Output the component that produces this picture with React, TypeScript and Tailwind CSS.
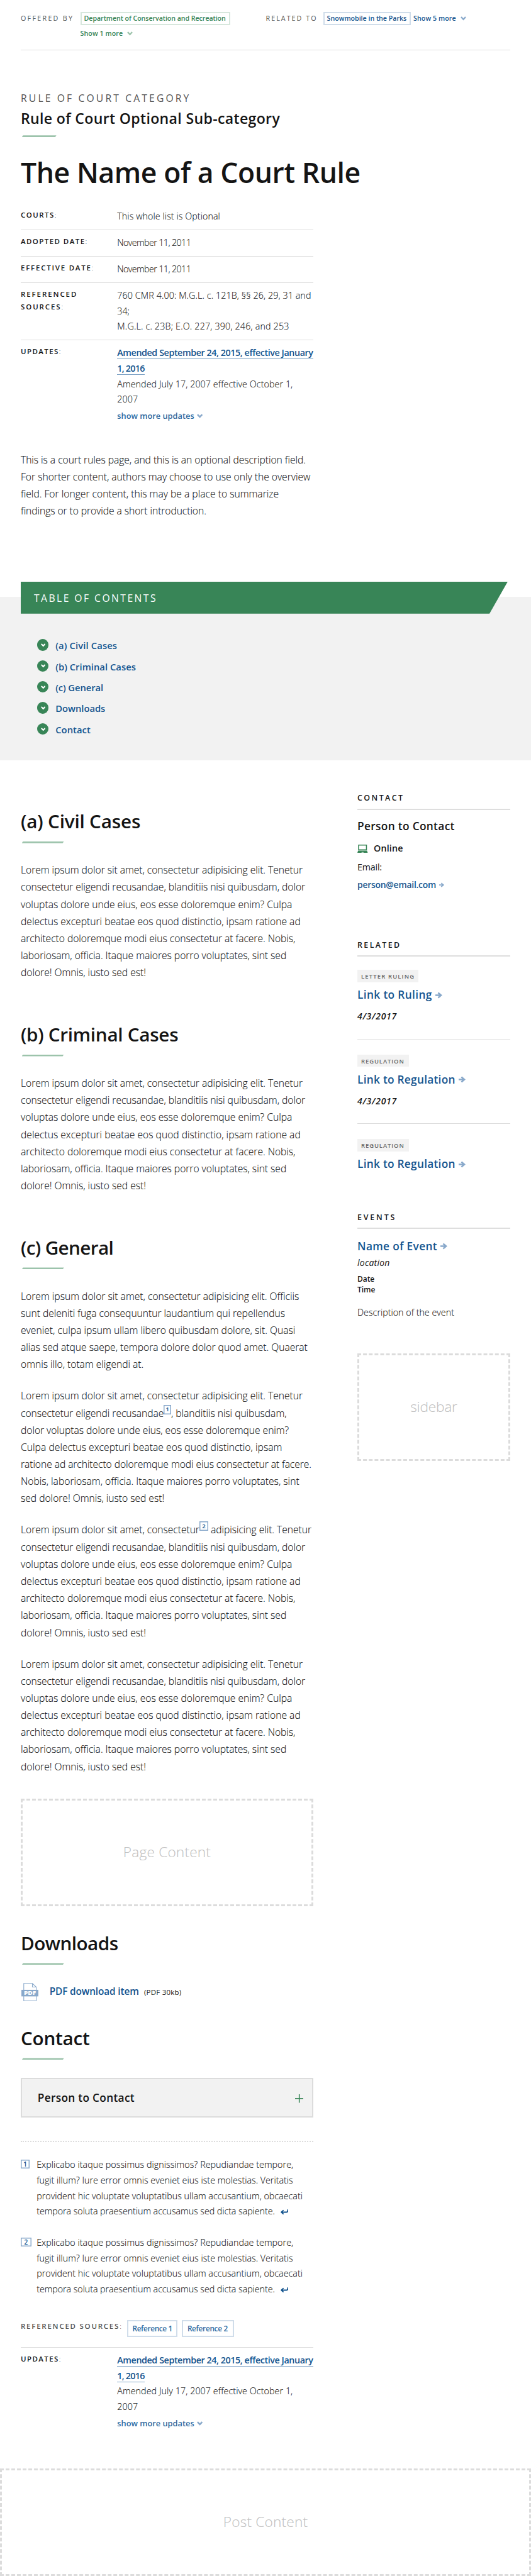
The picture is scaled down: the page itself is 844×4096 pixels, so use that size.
import type { ReactNode } from "react";

type Line = { text: ReactNode; track?: string };

const LOREM: Line[] = [
  { text: "Lorem ipsum dolor sit amet, consectetur adipisicing elit. Tenetur", track: "tracking-[-0.058px]" },
  { text: "consectetur eligendi recusandae, blanditiis nisi quibusdam, dolor", track: "tracking-[-0.056px]" },
  { text: "voluptas dolore unde eius, eos esse doloremque enim? Culpa", track: "tracking-[-0.025px]" },
  { text: "delectus excepturi beatae eos quod distinctio, ipsam ratione ad", track: "tracking-[-0.021px]" },
  { text: "architecto doloremque modi eius consectetur at facere. Nobis,", track: "tracking-[-0.053px]" },
  { text: "laboriosam, officia. Itaque maiores porro voluptates, sint sed", track: "tracking-[-0.04px]" },
  { text: "dolore! Omnis, iusto sed est!", track: "tracking-[-0.042px]" },
];

const INTRO: Line[] = [
  { text: "This is a court rules page, and this is an optional description field.", track: "tracking-[-0.06px]" },
  { text: "For shorter content, authors may choose to use only the overview", track: "tracking-[-0.031px]" },
  { text: "field. For longer content, this may be a place to summarize", track: "tracking-[-0.011px]" },
  { text: "findings or to provide a short introduction.", track: "tracking-[-0.084px]" },
];

const GENERAL_1: Line[] = [
  { text: "Lorem ipsum dolor sit amet, consectetur adipisicing elit. Officiis", track: "tracking-[-0.015px]" },
  { text: "sunt deleniti fuga consequuntur laudantium qui repellendus", track: "tracking-[-0.05px]" },
  { text: "eveniet, culpa ipsum ullam libero quibusdam dolore, sit. Quasi", track: "tracking-[0px]" },
  { text: "alias sed atque saepe, tempora dolore dolor quod amet. Quaerat", track: "tracking-[-0.037px]" },
  { text: "omnis illo, totam eligendi at.", track: "tracking-[-0.04px]" },
];

const GENERAL_2: Line[] = [
  LOREM[0],
  {
    text: (
      <>
        consectetur eligendi recusandae
        <Sup n="1" width="w-[11.5px]" />, blanditiis nisi quibusdam,
      </>
    ),
    track: "tracking-[-0.056px]",
  },
  { text: "dolor voluptas dolore unde eius, eos esse doloremque enim?", track: "tracking-[-0.065px]" },
  { text: "Culpa delectus excepturi beatae eos quod distinctio, ipsam", track: "tracking-[0.022px]" },
  { text: "ratione ad architecto doloremque modi eius consectetur at facere.", track: "tracking-[-0.087px]" },
  { text: "Nobis, laboriosam, officia. Itaque maiores porro voluptates, sint", track: "tracking-[-0.014px]" },
  { text: "sed dolore! Omnis, iusto sed est!", track: "tracking-[-0.042px]" },
];

const GENERAL_3: Line[] = [
  {
    text: (
      <>
        Lorem ipsum dolor sit amet, consectetur
        <Sup n="2" width="w-[14px]" /> adipisicing elit. Tenetur
      </>
    ),
    track: "tracking-[-0.058px]",
  },
  ...LOREM.slice(1),
];

const NOTE: Line[] = [
  { text: "Explicabo itaque possimus dignissimos? Repudiandae tempore,", track: "tracking-[0.031px]" },
  { text: "fugit illum? Iure error omnis eveniet eius iste molestias. Veritatis", track: "tracking-[-0.004px]" },
  { text: "provident hic voluptate voluptatibus ullam accusantium, obcaecati", track: "tracking-[-0.002px]" },
];

function Sup({ n, width }: { n: string; width: string }) {
  return (
    <a
      className={`${width} inline-flex h-[15px] items-center justify-center border-[1.5px] border-[#89a9cb] align-top text-[9.5px] leading-none font-semibold tracking-normal text-[#14558f] shadow-[inset_0_0_0_0.5px_#89a9cb]`}
    >
      {n}
    </a>
  );
}

function Lines({ lines, className = "" }: { lines: Line[]; className?: string }) {
  return (
    <p className={`text-[15.7px] leading-[27.2px] font-light [-webkit-text-stroke:0.1px] ${className}`}>
      {lines.map((l, i) => (
        <span key={i} className={`block h-[27.2px] whitespace-nowrap ${l.track ?? ""}`}>
          {l.text}
        </span>
      ))}
    </p>
  );
}

function Chevron({ className = "" }: { className?: string }) {
  return (
    <svg viewBox="0 0 12 9" className={className} fill="none" stroke="currentColor" strokeWidth="3.2">
      <path d="M1.2 1.4 6 6.4l4.8-5" />
    </svg>
  );
}

function Arrow({ className = "" }: { className?: string }) {
  return (
    <svg viewBox="0 0 20 18" className={className} fill="none" stroke="currentColor" strokeWidth="4.4">
      <path d="M0 9h16M8 1.8 16.6 9 8 16.2" />
    </svg>
  );
}

function ReturnArrow() {
  return (
    <svg viewBox="0 0 30 21" className="ml-[9px] inline-block h-[8.6px] w-[12.6px] align-[-0.5px] text-[#14558f]" fill="none" stroke="currentColor" strokeWidth="4.6" strokeLinecap="round" strokeLinejoin="round">
      <path d="M27.4 2.5v3.5q0 5-5 5H3M9.5 4.5l-7 6.5 7 6.5" />
    </svg>
  );
}

function Slant({ width }: { width: string }) {
  return <div className={`${width} ml-[1.6px] h-[3px] bg-[#9cc3ab] [clip-path:polygon(2px_0,100%_0,calc(100%-2px)_100%,0_100%)]`} />;
}

function Heading({ children, className, track }: { children: string; className: string; track: string }) {
  return (
    <div className={className}>
      <h2 className={`${track} mb-[13.8px] h-9 text-[29.7px] leading-9 font-semibold whitespace-nowrap`}>{children}</h2>
      <Slant width="w-[67px]" />
    </div>
  );
}

function Row({ label, labelTrack, last, children }: { label: ReactNode; labelTrack: string; last?: boolean; children: ReactNode }) {
  return (
    <div className={`flex pt-[8.3px] ${last ? "" : "border-b border-[#dcdcdc] pb-[8.2px]"}`}>
      <div className={`${labelTrack} w-[153.3px] shrink-0 text-[11.5px] leading-[19.8px] font-semibold uppercase`}>{label}</div>
      <div className="text-[14.3px] leading-[24.5px] font-light whitespace-nowrap [-webkit-text-stroke:0.1px]">{children}</div>
    </div>
  );
}

function Updates() {
  return (
    <Row label={<>Updates<span className="font-light">:</span></>} labelTrack="tracking-[1.4px]" last>
      <div className="leading-[24.6px]">
        <a className="block font-semibold text-[#14558f] [-webkit-text-stroke:0]">
          <span className="block h-[24.6px]">
            <span className="border-b border-[#7fa3c6] tracking-[-0.416px]">Amended September 24, 2015, effective January</span>
          </span>
          <span className="block h-[24.6px]">
            <span className="border-b border-[#7fa3c6] tracking-[-0.739px]">1, 2016</span>
          </span>
        </a>
        <span className="block h-[24.6px] tracking-[0.07px]">Amended July 17, 2007 effective October 1,</span>
        <span className="block h-[24.6px] tracking-[0.07px]">2007</span>
        <a className="mt-px block text-[12.8px] font-semibold text-[#2d69a0] [-webkit-text-stroke:0]">
          show more updates
          <Chevron className="ml-[4px] inline-block h-[7px] w-[9.3px] align-[0.5px] text-[#89a9cb]" />
        </a>
      </div>
    </Row>
  );
}

function SideHeading({ children, track }: { children: string; track: string }) {
  return <h3 className={`${track} h-[26.7px] border-b-2 border-[#dedede] text-[12.4px] leading-4 font-semibold uppercase`}>{children}</h3>;
}

function SideLink({ children, track, className = "" }: { children: string; track: string; className?: string }) {
  return (
    <a className={`flex h-6 items-center text-[17.3px] leading-6 font-semibold whitespace-nowrap text-[#14558f] ${className}`}>
      <span className={track}>{children}</span>
      <Arrow className="ml-[5.5px] h-[11px] w-[11px] text-[#89a9cb]" />
    </a>
  );
}

function Tag({ children, className }: { children: string; className: string }) {
  return (
    <div className={`${className} h-[19.8px] bg-[#f2f2f2] pl-[6px] text-[9.4px] leading-[21px] font-semibold whitespace-nowrap text-[#666] uppercase`}>
      {children}
    </div>
  );
}

function Placeholder({ children, className }: { children: string; className: string }) {
  return (
    <div className={`flex items-center justify-center border-[3px] border-dashed border-[#dcdcdc] pb-px text-[22.7px] font-light text-[#bfbfbf] [-webkit-text-stroke:0.1px] ${className}`}>
      {children}
    </div>
  );
}

function Laptop() {
  return (
    <svg viewBox="0 0 20 16" className="h-[13.2px] w-[16.5px]">
      <path fill="#388557" fillRule="evenodd" d="M1.5 0h17v11h-17zM3.4 1.8v7.4h13.2V1.8z" />
      <path fill="#388557" d="M1.4 11.6h17.2L20 15.9H0z" />
      <path fill="#d7e7dd" d="M8.3 14.2h3.4l.4 1.2H7.9z" />
    </svg>
  );
}

function PdfIcon() {
  return (
    <svg viewBox="0 0 33 36" className="h-[29.4px] w-[27px]">
      <path d="M4.6 1h16.8l7.4 7v26.8H4.6zM21.4 1v7h7.4" fill="#fff" stroke="#89a9cb" strokeWidth="1.3" />
      <rect x="0" y="13.4" width="33" height="12.8" fill="#89a9cb" />
      <text x="16.5" y="23.3" textAnchor="middle" fontSize="10" fontWeight="800" fill="#fff" textLength="23.5" lengthAdjust="spacingAndGlyphs">
        PDF
      </text>
    </svg>
  );
}

function Footnote({ n, width, className }: { n: string; width: string; className: string }) {
  return (
    <div className={`flex ${className}`}>
      <div className="w-[25.2px] pt-[3.9px]">
        <a className={`${width} flex h-[14.3px] items-center justify-center border-[1.5px] border-[#89a9cb] text-[10px] leading-none font-semibold text-[#14558f] shadow-[inset_0_0_0_0.5px_#89a9cb]`}>{n}</a>
      </div>
      <p className="text-[14.3px] leading-[24.7px] font-light whitespace-nowrap [-webkit-text-stroke:0.1px]">
        {NOTE.map((l, i) => (
          <span key={i} className={`block h-[24.7px] ${l.track}`}>{l.text}</span>
        ))}
        <span className="block h-[24.7px] tracking-[-0.06px]">
          tempora soluta praesentium accusamus sed dicta sapiente.
          <ReturnArrow />
        </span>
      </p>
    </div>
  );
}

const TOC: [string, string][] = [
  ["(a) Civil Cases", "tracking-[0.12px]"],
  ["(b) Criminal Cases", "tracking-[0.02px]"],
  ["(c) General", "tracking-[-0.1px]"],
  ["Downloads", "tracking-[-0.05px]"],
  ["Contact", "tracking-[0.02px]"],
];

export default function App() {
  return (
    <div className="flex h-[4096px] w-[844px] flex-col overflow-hidden bg-white font-['Open_Sans',sans-serif] text-[#141414]">
      <header className="mx-[33px] flex h-[80px] shrink-0 border-b border-[#dcdcdc] pt-[19px] text-[10.7px] leading-[20.6px] whitespace-nowrap">
        <div className="flex w-[389.6px]">
          <span className="w-[94.6px] tracking-[2.3px] text-[#535353]">OFFERED BY</span>
          <div className="font-semibold text-[#388557]">
            <a className="flex h-[21px] w-[238px] items-center border-2 border-[#d7e7dd] pl-[4px] tracking-[-0.08px]">Department of Conservation and Recreation</a>
            <a className="mt-[3.2px] flex items-center tracking-[0.04px]">
              Show 1 more
              <Chevron className="ml-[7px] h-[6.6px] w-[9px] text-[#9cc3ab]" />
            </a>
          </div>
        </div>
        <div className="flex text-[#14558f]">
          <span className="w-[91px] tracking-[2.05px] text-[#535353]">RELATED TO</span>
          <a className="flex h-[21px] w-[139.5px] items-center border-2 border-[#d0ddea] pl-[4px] font-semibold tracking-[-0.03px]">Snowmobile in the Parks</a>
          <a className="ml-[4px] flex h-[21px] items-center font-semibold tracking-[0.04px]">
            Show 5 more
            <Chevron className="ml-[7px] h-[6.6px] w-[9px] text-[#89a9cb]" />
          </a>
        </div>
      </header>

      <section className="ml-[33px] w-[465px] shrink-0 pt-[64px]">
        <div className="h-6 text-[15.7px] leading-6 tracking-[3.13px] whitespace-nowrap text-[#535353]">RULE OF COURT CATEGORY</div>
        <div className="mt-1 mb-[11.2px] h-8 text-[23.1px] leading-8 font-semibold tracking-[0.33px] whitespace-nowrap">Rule of Court Optional Sub-category</div>
        <Slant width="w-[55px]" />
        <h1 className="mt-[27.4px] h-14 text-[44.5px] leading-[56px] font-semibold tracking-[-0.42px] whitespace-nowrap">The Name of a Court Rule</h1>
        <div className="mt-[22.6px]">
          <Row label={<>Courts<span className="font-light">:</span></>} labelTrack="tracking-[1.45px]">
            <span className="tracking-[0.067px]">This whole list is Optional</span>
          </Row>
          <Row label={<>Adopted Date<span className="font-light">:</span></>} labelTrack="tracking-[1.42px]">
            <span className="tracking-[-0.6px]">November 11, 2011</span>
          </Row>
          <Row label={<>Effective Date<span className="font-light">:</span></>} labelTrack="tracking-[1.77px]">
            <span className="tracking-[-0.6px]">November 11, 2011</span>
          </Row>
          <Row label={<>Referenced<br />Sources<span className="font-light">:</span></>} labelTrack="tracking-[1.9px]">
            <span className="block tracking-[0.09px]">760 CMR 4.00: M.G.L. c. 121B, §§ 26, 29, 31 and</span>
            <span className="block">34;</span>
            <span className="block tracking-[0.17px]">M.G.L. c. 23B; E.O. 227, 390, 246, and 253</span>
          </Row>
          <Updates />
        </div>
        <Lines lines={INTRO} className="mt-[44.3px]" />
      </section>

      <section className="mt-[123px] flex h-[259.4px] shrink-0 flex-col bg-[#f2f2f2] pl-[33px]">
        <h2 className="-mt-[24.8px] h-[51px] w-[774px] shrink-0 bg-[#388557] pl-[21px] text-[15.7px] leading-[52.6px] tracking-[2.45px] text-white [clip-path:polygon(0_0,100%_0,calc(100%-29px)_100%,0_100%)]">
          TABLE OF CONTENTS
        </h2>
        <ul className="mt-[33px] pl-[26px]">
          {TOC.map(([t, track]) => (
            <li key={t} className="flex h-[33.4px] items-center">
              <span className="flex size-[18.4px] items-center justify-center rounded-full bg-[#388557]">
                <Chevron className="mt-px h-[5.6px] w-[7.4px] text-white" />
              </span>
              <a className={`${track} mt-[1.8px] ml-[10.8px] text-[14.8px] leading-[30px] font-semibold text-[#14558f]`}>{t}</a>
            </li>
          ))}
        </ul>
      </section>

      <div className="flex shrink-0 pr-[33px] pl-[33px]">
        <main className="w-[465px]">
          <Heading className="pt-[79.2px]" track="tracking-[-0.186px]">(a) Civil Cases</Heading>
          <Lines lines={LOREM} className="mt-[29.4px]" />
          <Heading className="pt-[66.3px]" track="tracking-[-0.296px]">(b) Criminal Cases</Heading>
          <Lines lines={LOREM} className="mt-[29.4px]" />
          <Heading className="pt-[66.3px]" track="tracking-[-0.64px]">(c) General</Heading>
          <Lines lines={GENERAL_1} className="mt-[29.2px]" />
          <Lines lines={GENERAL_2} className="mt-[22.8px]" />
          <Lines lines={GENERAL_3} className="mt-[22.8px]" />
          <Lines lines={LOREM} className="mt-[22.8px]" />
          <Placeholder className="mt-[36.9px] h-[171.5px] tracking-[0.17px]">Page Content</Placeholder>

          <Heading className="pt-[40.4px]" track="tracking-[-0.543px]">Downloads</Heading>
          <div className="mt-[28.6px] flex h-[29.4px] whitespace-nowrap">
            <div className="w-[45.7px] pl-[0.8px]">
              <PdfIcon />
            </div>
            <a className="w-[150.3px] text-[15.4px] leading-[27.6px] font-semibold tracking-[-0.138px] text-[#14558f]">PDF download item</a>
            <span className="text-[11.5px] leading-[29.6px] tracking-[0.226px]">(PDF 30kb)</span>
          </div>

          <Heading className="pt-[40.2px]" track="tracking-[-0.256px]">Contact</Heading>
          <div className="mt-[28.4px] flex h-[63.5px] items-center justify-between border-2 border-[#dcdcdc] bg-[#f2f2f2] pr-[14px] pl-[24.8px]">
            <span className="mt-[1.4px] text-[17.3px] leading-6 font-semibold tracking-[0.295px]">Person to Contact</span>
            <svg viewBox="0 0 16 16" className="mt-[3px] size-[13.4px]" fill="none" stroke="#388557" strokeWidth="1.9">
              <path d="M0 8h16M8 0v16" />
            </svg>
          </div>

          <div className="mt-[37px] border-t-2 border-dotted border-[#dcdcdc]" />
          <Footnote n="1" width="w-[14px]" className="mt-[24px]" />
          <Footnote n="2" width="w-[16.5px]" className="mt-[24.8px]" />

          <div className="mt-[36.7px] flex h-[26.4px] whitespace-nowrap">
            <span className="w-[169px] text-[11.5px] leading-[20.6px] font-semibold tracking-[1.757px] text-[#535353]">REFERENCED SOURCES<span className="font-light">:</span></span>
            <a className="flex h-[26.4px] w-[80px] items-center border-2 border-[#d0ddea] pt-px pl-[6.5px] text-[11.8px] font-semibold tracking-[-0.36px] text-[#2d69a0]">Reference 1</a>
            <a className="ml-[7.4px] flex h-[26.4px] w-[82.4px] items-center border-2 border-[#d0ddea] pt-px pl-[6.5px] text-[11.8px] font-semibold tracking-[-0.3px] text-[#2d69a0]">Reference 2</a>
          </div>
          <div className="mt-[16.2px] border-t border-[#dcdcdc]">
            <Updates />
          </div>
        </main>

        <aside className="ml-[70px] w-[243px] pt-[52.1px]">
          <SideHeading track="tracking-[2.45px]">Contact</SideHeading>
          <div className="mt-[14.1px] h-6 text-[17.3px] leading-6 font-semibold tracking-[0.33px] whitespace-nowrap">Person to Contact</div>
          <div className="mt-[11.8px] flex h-6 items-center">
            <Laptop />
            <span className="ml-[9.5px] text-[14.3px] leading-6 font-semibold tracking-[0.17px]">Online</span>
          </div>
          <div className="mt-[5.8px] h-6 text-[14.3px] leading-6 tracking-[-0.2px]">Email:</div>
          <a className="mt-[4.1px] flex h-6 items-center text-[13.9px] leading-6 font-semibold text-[#14558f]">
            <span className="tracking-[-0.224px]">person@email.com</span>
            <Arrow className="ml-[5px] h-[8.2px] w-[8.2px] text-[#89a9cb]" />
          </a>

          <div className="mt-[75.4px]">
            <SideHeading track="tracking-[2.4px]">Related</SideHeading>
          </div>
          <Tag className="mt-[20.5px] w-[97px] tracking-[1.2px]">Letter Ruling</Tag>
          <SideLink className="mt-[8.5px]" track="tracking-[0.364px]">Link to Ruling</SideLink>
          <div className="mt-[9.9px] h-6 text-[14px] leading-6 font-semibold tracking-[0.74px] italic">4/3/2017</div>
          <div className="mt-[23.4px] border-t border-[#e2e2e2]" />
          <Tag className="mt-[24px] w-[81.6px] tracking-[0.96px]">Regulation</Tag>
          <SideLink className="mt-[8.5px]" track="tracking-[0.263px]">Link to Regulation</SideLink>
          <div className="mt-[9.9px] h-6 text-[14px] leading-6 font-semibold tracking-[0.74px] italic">4/3/2017</div>
          <div className="mt-[23.4px] border-t border-[#dcdcdc]" />
          <Tag className="mt-[24px] w-[81.6px] tracking-[0.96px]">Regulation</Tag>
          <SideLink className="mt-[8.5px]" track="tracking-[0.263px]">Link to Regulation</SideLink>

          <div className="mt-[64.4px]">
            <SideHeading track="tracking-[2.85px]">Events</SideHeading>
          </div>
          <SideLink className="mt-[15.1px]" track="tracking-[0.349px]">Name of Event</SideLink>
          <div className="mt-[4.9px] h-5 text-[14px] leading-5 tracking-[0.23px] italic">location</div>
          <div className="mt-[6.2px] text-[12px] leading-[17.7px] font-semibold tracking-[-0.06px]">Date<br />Time</div>
          <div className="mt-[14.6px] h-6 text-[14.3px] leading-6 font-light whitespace-nowrap [-webkit-text-stroke:0.1px]">Description of the event</div>
          <Placeholder className="mt-[53.2px] h-[171.4px] tracking-[-0.226px]">sidebar</Placeholder>
        </aside>
      </div>

      <div className="mt-auto shrink-0">
        <Placeholder className="h-[171.3px] tracking-[0.17px]">Post Content</Placeholder>
      </div>
    </div>
  );
}
